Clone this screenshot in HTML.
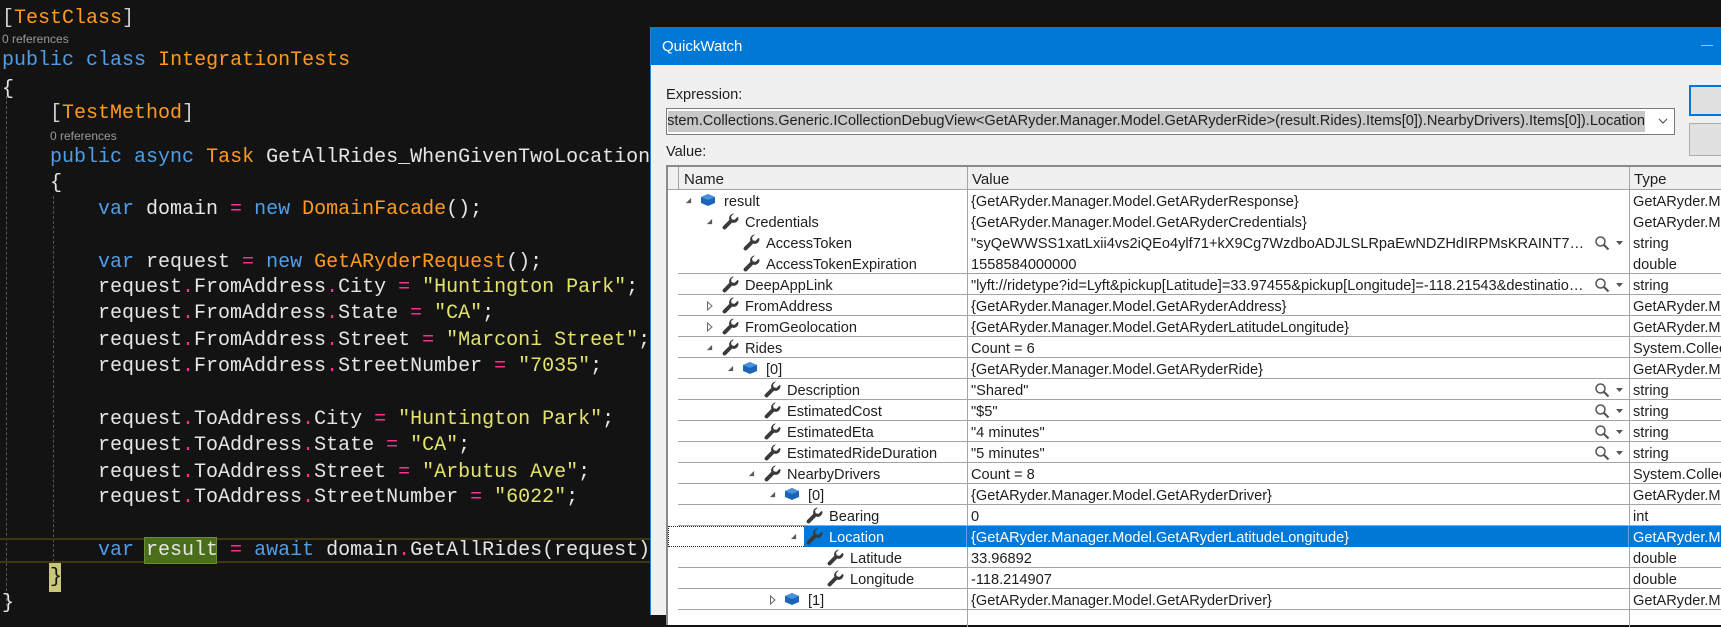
<!DOCTYPE html>
<html><head><meta charset="utf-8">
<style>
*{margin:0;padding:0;box-sizing:border-box}
html,body{width:1721px;height:615px;overflow:hidden;background:#131313}
.code{position:absolute;left:0;top:0;width:1721px;height:615px;font-family:"Liberation Mono",monospace;font-size:20px;color:#e6e6e6}
.l{position:absolute;white-space:pre;line-height:26px;height:26px}
.cl{position:absolute;font-family:"Liberation Sans",sans-serif;font-size:12px;color:#9a9a9a;white-space:pre}
.k{color:#4f9ee8}.t{color:#ff9a1f}.s{color:#e3e36c}.o{color:#ff2f8e}.p{color:#d0d0d0}
.guide{position:absolute;width:0;border-left:1px dashed #555}
.dlg{position:absolute;left:650px;top:27px;width:1071px;height:588px;background:#f0f0f0;border-left:1px solid #2b7fd4;font-family:"Liberation Sans",sans-serif;font-size:14.6px;color:#1e1e1e}
.title{position:absolute;left:0;top:0;width:1071px;height:38px;background:#0078d7;color:#fff;font-size:15px;padding:11px 0 0 11px}
.a{position:absolute;white-space:nowrap}
.row{position:absolute;left:0;width:1721px;height:21px}
.n,.v,.ty{position:absolute;top:3px;line-height:18px;white-space:nowrap}
.v{left:971px;width:618px;overflow:hidden;text-overflow:ellipsis}
.ty{left:1633px}
.bl{position:absolute;left:678px;right:0;bottom:0;border-bottom:1px solid #a5a5a5}
.ic{position:absolute;top:2px}
.ar{position:absolute;top:7px}
.mag{position:absolute;left:1594px;top:3px}
</style></head><body>
<div class="code">
<div class="guide" style="left:6px;top:96px;height:510px"></div>
<div class="guide" style="left:53px;top:196px;height:366px"></div>
<div style="position:absolute;left:0;top:538px;width:1721px;height:25px;border-top:2px solid #3e3712;border-bottom:2px solid #3e3712"></div>
<div style="position:absolute;left:144px;top:537px;width:73px;height:27px;background:#4a6e1a;border:1px solid #6b8c30"></div>
<div style="position:absolute;left:49px;top:563px;width:12px;height:29px;background:#c9c87a"></div>
<div class="l" style="left:2px;top:6px"><span class="p">[</span><span class="t">TestClass</span><span class="p">]</span></div>
<div class="cl" style="left:2px;top:32px">0 references</div>
<div class="l" style="left:2px;top:48px"><span class="k">public</span> <span class="k">class</span> <span class="t">IntegrationTests</span></div>
<div class="l" style="left:2px;top:77px">{</div>
<div class="l" style="left:50px;top:101px"><span class="p">[</span><span class="t">TestMethod</span><span class="p">]</span></div>
<div class="cl" style="left:50px;top:129px">0 references</div>
<div class="l" style="left:50px;top:145px"><span class="k">public</span> <span class="k">async</span> <span class="t">Task</span> GetAllRides_WhenGivenTwoLocations()</div>
<div class="l" style="left:50px;top:171px">{</div>
<div class="l" style="left:98px;top:197px"><span class="k">var</span> domain <span class="o">=</span> <span class="k">new</span> <span class="t">DomainFacade</span>();</div>
<div class="l" style="left:98px;top:250px"><span class="k">var</span> request <span class="o">=</span> <span class="k">new</span> <span class="t">GetARyderRequest</span>();</div>
<div class="l" style="left:98px;top:275px">request<span class="o">.</span>FromAddress<span class="o">.</span>City <span class="o">=</span> <span class="s">"Huntington Park"</span>;</div>
<div class="l" style="left:98px;top:301px">request<span class="o">.</span>FromAddress<span class="o">.</span>State <span class="o">=</span> <span class="s">"CA"</span>;</div>
<div class="l" style="left:98px;top:328px">request<span class="o">.</span>FromAddress<span class="o">.</span>Street <span class="o">=</span> <span class="s">"Marconi Street"</span>;</div>
<div class="l" style="left:98px;top:354px">request<span class="o">.</span>FromAddress<span class="o">.</span>StreetNumber <span class="o">=</span> <span class="s">"7035"</span>;</div>
<div class="l" style="left:98px;top:407px">request<span class="o">.</span>ToAddress<span class="o">.</span>City <span class="o">=</span> <span class="s">"Huntington Park"</span>;</div>
<div class="l" style="left:98px;top:433px">request<span class="o">.</span>ToAddress<span class="o">.</span>State <span class="o">=</span> <span class="s">"CA"</span>;</div>
<div class="l" style="left:98px;top:460px">request<span class="o">.</span>ToAddress<span class="o">.</span>Street <span class="o">=</span> <span class="s">"Arbutus Ave"</span>;</div>
<div class="l" style="left:98px;top:485px">request<span class="o">.</span>ToAddress<span class="o">.</span>StreetNumber <span class="o">=</span> <span class="s">"6022"</span>;</div>
<div class="l" style="left:98px;top:538px"><span class="k">var</span> result <span class="o">=</span> <span class="k">await</span> domain<span class="o">.</span>GetAllRides(request);</div>
<div class="l" style="left:50px;top:565px;color:#111">}</div>
<div class="l" style="left:2px;top:591px">}</div>
</div>

<svg width="0" height="0" style="position:absolute">
<defs>
<symbol id="w" viewBox="0 0 16 16"><path d="M15.5 4.8a4.6 4.6 0 0 1-6 4.3L3.7 14.9a1.8 1.8 0 0 1-2.6-2.6L6.9 6.5A4.6 4.6 0 0 1 11.2.5L8.5 3.2l.6 2.7 2.7.6L14.5 3.8c.7.1 1 .5 1 1z" fill="#3a3a3a"/></symbol>
<symbol id="c" viewBox="0 0 16 16"><path d="M8 2 15 5v6l-7 3-7-3V5z" fill="#1c64b8"/><path d="M8 2 15 5 8 8 1 5z" fill="#4a90dc"/></symbol>
<symbol id="e" viewBox="0 0 8 8"><path d="M7 1V7H1z" fill="#5a5a5a"/></symbol>
<symbol id="x" viewBox="0 0 8 10"><path d="M1.5 1 6 5 1.5 9z" fill="none" stroke="#6a6a6a"/></symbol>
<symbol id="m" viewBox="0 0 30 16"><circle cx="6.5" cy="6.5" r="4.5" fill="none" stroke="#555" stroke-width="1.5"/><path d="M10 10l4.5 4.5" stroke="#555" stroke-width="2.2"/><path d="M22 6h7l-3.5 4z" fill="#555"/></symbol>
</defs></svg>

<div class="dlg">
<div class="title">QuickWatch<span style="position:absolute;left:1050px;top:18px;width:12px;border-top:1px solid #9cc5ee"></span></div>
<div class="a" style="left:15px;top:60px">Expression:</div>
<div class="a" style="left:15px;top:81px;width:1009px;height:27px;background:#fff;border:1px solid #7a7a7a"></div>
<div class="a" style="left:17px;top:84px;width:977px;height:21px;background:#c8c8c8;overflow:hidden;line-height:21px;direction:rtl;text-align:left"><span style="direction:ltr;unicode-bidi:embed">((System.Collections.Generic.ICollectionDebugView&lt;GetARyder.Manager.Model.GetARyderRide&gt;(result.Rides).Items[0]).NearbyDrivers).Items[0]).Location</span></div>
<svg class="a" style="left:1007px;top:90px" width="10" height="8"><path d="M1 2l4 4 4-4" fill="none" stroke="#444"/></svg>
<div class="a" style="left:1038px;top:58px;width:40px;height:31px;background:#e1e1e1;border:2px solid #0078d7"></div>
<div class="a" style="left:1038px;top:96px;width:40px;height:33px;background:#e1e1e1;border:1px solid #adadad"></div>
<div class="a" style="left:15px;top:117px">Value:</div>
<div class="a" style="left:15px;top:138px;width:1060px;height:460px;background:#fff;border-left:2px solid #8a8a8a;border-top:2px solid #8a8a8a"></div>
<div class="a" style="left:17px;top:140px;width:1060px;height:23px;background:#f0f0f0;border-bottom:1px solid #a5a5a5"></div>
<div class="a" style="left:27px;top:140px;height:23px;border-left:1px solid #a5a5a5"></div>
<div class="a" style="left:316px;top:140px;height:460px;border-left:1px solid #a5a5a5"></div>
<div class="a" style="left:978px;top:140px;height:460px;border-left:1px solid #a5a5a5"></div>
<div class="a" style="left:33px;top:144px;font-size:15px">Name</div>
<div class="a" style="left:321px;top:144px;font-size:15px">Value</div>
<div class="a" style="left:983px;top:144px;font-size:15px">Type</div>
</div>

<div style="position:absolute;left:0;top:0;width:1721px;height:615px;font-family:'Liberation Sans',sans-serif;font-size:14.6px;color:#1e1e1e">
<div class="row" style="top:190px"><svg class="ar" style="left:685px" width="7" height="7"><use href="#e"/></svg><svg class="ic" style="left:700px" width="16" height="16"><use href="#c"/></svg><span class="n" style="left:724px">result</span><span class="v">{GetARyder.Manager.Model.GetARyderResponse}</span><span class="ty">GetARyder.M</span></div>
<div class="row" style="top:211px"><svg class="ar" style="left:706px" width="7" height="7"><use href="#e"/></svg><svg class="ic" style="left:722px" width="17" height="17"><use href="#w"/></svg><span class="n" style="left:745px">Credentials</span><span class="v">{GetARyder.Manager.Model.GetARyderCredentials}</span><span class="ty">GetARyder.M</span></div>
<div class="row" style="top:232px"><svg class="ic" style="left:743px" width="17" height="17"><use href="#w"/></svg><span class="n" style="left:766px">AccessToken</span><span class="v">"syQeWWSS1xatLxii4vs2iQEo4ylf71+kX9Cg7WzdboADJLSLRpaEwNDZHdIRPMsKRAINT7+nd4GhbW2k"</span><svg class="mag" width="30" height="16"><use href="#m"/></svg><span class="ty">string</span></div>
<div class="row" style="top:253px"><svg class="ic" style="left:743px" width="17" height="17"><use href="#w"/></svg><span class="n" style="left:766px">AccessTokenExpiration</span><span class="v">1558584000000</span><span class="ty">double</span><div class="bl"></div></div>
<div class="row" style="top:274px"><svg class="ic" style="left:722px" width="17" height="17"><use href="#w"/></svg><span class="n" style="left:745px">DeepAppLink</span><span class="v">"lyft://ridetype?id=Lyft&amp;pickup[Latitude]=33.97455&amp;pickup[Longitude]=-118.21543&amp;destination[Latitude]"</span><svg class="mag" width="30" height="16"><use href="#m"/></svg><span class="ty">string</span><div class="bl"></div></div>
<div class="row" style="top:295px"><svg class="ar" style="left:706px;top:6px" width="8" height="10"><use href="#x"/></svg><svg class="ic" style="left:722px" width="17" height="17"><use href="#w"/></svg><span class="n" style="left:745px">FromAddress</span><span class="v">{GetARyder.Manager.Model.GetARyderAddress}</span><span class="ty">GetARyder.M</span><div class="bl"></div></div>
<div class="row" style="top:316px"><svg class="ar" style="left:706px;top:6px" width="8" height="10"><use href="#x"/></svg><svg class="ic" style="left:722px" width="17" height="17"><use href="#w"/></svg><span class="n" style="left:745px">FromGeolocation</span><span class="v">{GetARyder.Manager.Model.GetARyderLatitudeLongitude}</span><span class="ty">GetARyder.M</span><div class="bl"></div></div>
<div class="row" style="top:337px"><svg class="ar" style="left:706px" width="7" height="7"><use href="#e"/></svg><svg class="ic" style="left:722px" width="17" height="17"><use href="#w"/></svg><span class="n" style="left:745px">Rides</span><span class="v">Count = 6</span><span class="ty">System.Collec</span><div class="bl"></div></div>
<div class="row" style="top:358px"><svg class="ar" style="left:727px" width="7" height="7"><use href="#e"/></svg><svg class="ic" style="left:742px" width="16" height="16"><use href="#c"/></svg><span class="n" style="left:766px">[0]</span><span class="v">{GetARyder.Manager.Model.GetARyderRide}</span><span class="ty">GetARyder.M</span><div class="bl"></div></div>
<div class="row" style="top:379px"><svg class="ic" style="left:764px" width="17" height="17"><use href="#w"/></svg><span class="n" style="left:787px">Description</span><span class="v">"Shared"</span><svg class="mag" width="30" height="16"><use href="#m"/></svg><span class="ty">string</span><div class="bl"></div></div>
<div class="row" style="top:400px"><svg class="ic" style="left:764px" width="17" height="17"><use href="#w"/></svg><span class="n" style="left:787px">EstimatedCost</span><span class="v">"$5"</span><svg class="mag" width="30" height="16"><use href="#m"/></svg><span class="ty">string</span><div class="bl"></div></div>
<div class="row" style="top:421px"><svg class="ic" style="left:764px" width="17" height="17"><use href="#w"/></svg><span class="n" style="left:787px">EstimatedEta</span><span class="v">"4 minutes"</span><svg class="mag" width="30" height="16"><use href="#m"/></svg><span class="ty">string</span><div class="bl"></div></div>
<div class="row" style="top:442px"><svg class="ic" style="left:764px" width="17" height="17"><use href="#w"/></svg><span class="n" style="left:787px">EstimatedRideDuration</span><span class="v">"5 minutes"</span><svg class="mag" width="30" height="16"><use href="#m"/></svg><span class="ty">string</span><div class="bl"></div></div>
<div class="row" style="top:463px"><svg class="ar" style="left:748px" width="7" height="7"><use href="#e"/></svg><svg class="ic" style="left:764px" width="17" height="17"><use href="#w"/></svg><span class="n" style="left:787px">NearbyDrivers</span><span class="v">Count = 8</span><span class="ty">System.Collec</span><div class="bl"></div></div>
<div class="row" style="top:484px"><svg class="ar" style="left:769px" width="7" height="7"><use href="#e"/></svg><svg class="ic" style="left:784px" width="16" height="16"><use href="#c"/></svg><span class="n" style="left:808px">[0]</span><span class="v">{GetARyder.Manager.Model.GetARyderDriver}</span><span class="ty">GetARyder.M</span><div class="bl"></div></div>
<div class="row" style="top:505px"><svg class="ic" style="left:806px" width="17" height="17"><use href="#w"/></svg><span class="n" style="left:829px">Bearing</span><span class="v">0</span><span class="ty">int</span><div class="bl"></div></div>
<div class="row" style="top:526px"><div style="position:absolute;left:668px;top:0;width:1060px;height:21px;border:1px dotted #222"></div><div style="position:absolute;left:804px;top:0;right:0;height:21px;background:#0078d7"></div><div style="position:absolute;left:966px;top:0;height:21px;border-left:1px solid #5a9fdf"></div><div style="position:absolute;left:1628px;top:0;height:21px;border-left:1px solid #5a9fdf"></div><svg class="ar" style="left:790px" width="7" height="7"><use href="#e"/></svg><svg class="ic" style="left:806px" width="17" height="17"><use href="#w"/></svg><span class="n" style="left:829px;color:#fff">Location</span><span class="v" style="color:#fff">{GetARyder.Manager.Model.GetARyderLatitudeLongitude}</span><span class="ty" style="color:#fff">GetARyder.M</span></div>
<div class="row" style="top:547px"><svg class="ic" style="left:827px" width="17" height="17"><use href="#w"/></svg><span class="n" style="left:850px">Latitude</span><span class="v">33.96892</span><span class="ty">double</span><div class="bl"></div></div>
<div class="row" style="top:568px"><svg class="ic" style="left:827px" width="17" height="17"><use href="#w"/></svg><span class="n" style="left:850px">Longitude</span><span class="v">-118.214907</span><span class="ty">double</span><div class="bl"></div></div>
<div class="row" style="top:589px"><svg class="ar" style="left:769px;top:6px" width="8" height="10"><use href="#x"/></svg><svg class="ic" style="left:784px" width="16" height="16"><use href="#c"/></svg><span class="n" style="left:808px">[1]</span><span class="v">{GetARyder.Manager.Model.GetARyderDriver}</span><span class="ty">GetARyder.M</span><div class="bl"></div></div>
</div>
</body></html>
